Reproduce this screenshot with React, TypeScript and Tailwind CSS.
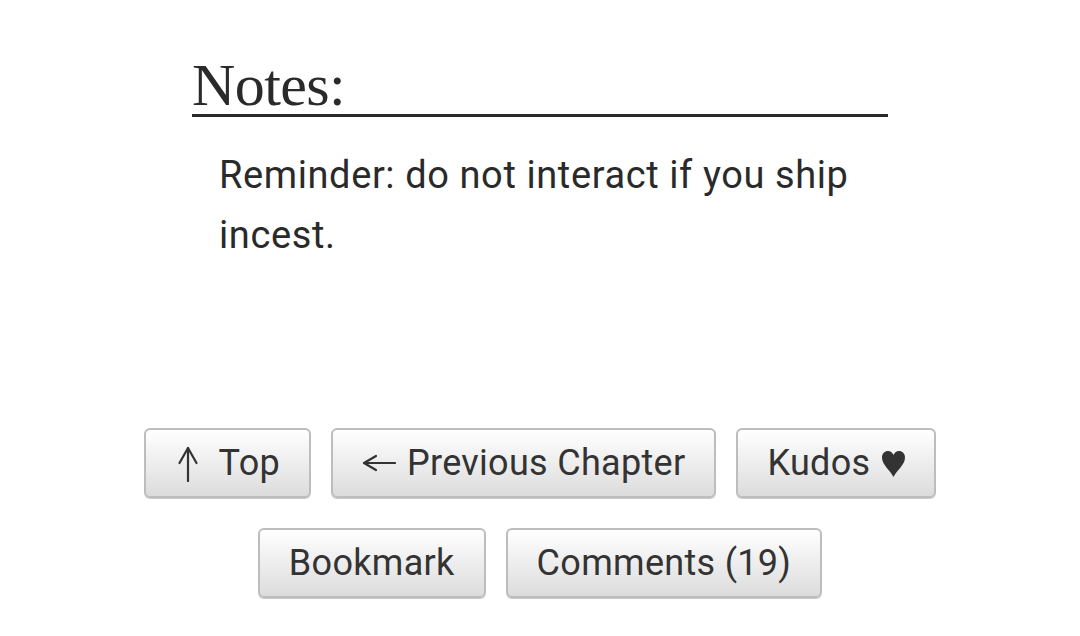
import React from 'react';

const buttonClass =
  'rounded-[6px] border-2 border-[#bdbdbd] bg-gradient-to-b from-[#ffffff] to-[#dcdcdc] px-[29px] h-[70px] flex items-center text-[36px] tracking-[0.3px] text-[#333333] shadow-[0_1px_0_#c8c8c8]';

const UpArrow = () => (
  <svg width="26" height="36" viewBox="0 0 26 36" className="mr-[18px] mt-[2px]" fill="none" stroke="#333333" strokeWidth="2.2" strokeLinecap="round" strokeLinejoin="round">
    <path d="M13 2 V35" />
    <path d="M4.5 17 L13 2 L21.5 17" />
  </svg>
);

const LeftArrow = () => (
  <svg width="34" height="18" viewBox="0 0 34 18" className="mr-[11px]" fill="none" stroke="#333333" strokeWidth="2.2" strokeLinecap="round" strokeLinejoin="round">
    <path d="M2 9 H33" />
    <path d="M14 2 L2 9 L14 16" />
  </svg>
);

const Heart = () => (
  <svg width="23" height="26" viewBox="0 0 23 26" className="ml-[12px] mt-[2px]" fill="#333333">
    <path d="M11.5 26 C8 19 0 14 0 6.5 C0 2.5 2.8 0 6 0 C8.8 0 10.6 1.8 11.5 4 C12.4 1.8 14.2 0 17 0 C20.2 0 23 2.5 23 6.5 C23 14 15 19 11.5 26 Z" />
  </svg>
);

const App: React.FC = () => {
  return (
    <div className="w-[1080px] h-[636px] bg-white overflow-hidden" style={{ fontFamily: 'Roboto, "Liberation Sans", sans-serif' }}>
      <div className="w-[696px] ml-[192px] pt-[56px]">
        <h3
          className="text-[60px] leading-[58px] tracking-[-0.6px] text-[#2a2a2a] border-b-[3px] border-[#2a2a2a]"
          style={{ fontFamily: '"Liberation Serif", serif' }}
        >
          Notes:
        </h3>
        <p className="pl-[27px] pr-[20px] mt-[28px] text-[38px] tracking-[0.6px] leading-[60px] text-[#2a2a2a]">
          Reminder: do not interact if you ship incest.
        </p>
      </div>

      <div className="mt-[163px] flex flex-col items-center gap-[30px]">
        <div className="flex gap-[20px]">
          <button className={buttonClass}>
            <UpArrow />Top
          </button>
          <button className={buttonClass}>
            <LeftArrow />Previous Chapter
          </button>
          <button className={buttonClass}>
            Kudos<Heart />
          </button>
        </div>
        <div className="flex gap-[20px]">
          <button className={buttonClass}>Bookmark</button>
          <button className={buttonClass}>Comments (19)</button>
        </div>
      </div>
    </div>
  );
};

export default App;
